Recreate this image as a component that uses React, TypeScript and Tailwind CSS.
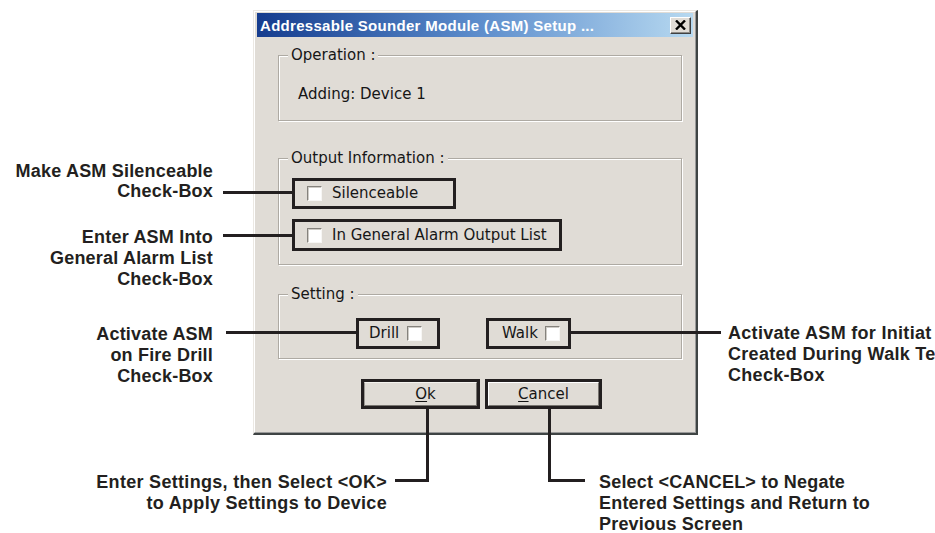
import React from 'react'

const ink = 'bg-[#231f20]'

const CheckBox = () => (
  <span className="inline-block w-[15px] h-[15px] shrink-0 bg-white border border-t-[#85827d] border-l-[#85827d] border-r-[#f7f6f4] border-b-[#f7f6f4] shadow-[inset_1px_1px_0_#cfccc7]" />
)

const Group = ({ label, className, children }: { label: string; className: string; children: React.ReactNode }) => (
  <div className={`relative w-[404px] ml-[21px] border border-[#aeaaa3] shadow-[inset_1px_1px_0_#fff,1px_1px_0_#fff] ${className}`}>
    <span className="absolute -top-[10px] left-[9px] bg-[#e0dcd6] px-[3px] leading-[18px]">{label}</span>
    {children}
  </div>
)

const App = () => {
  return (
    <div className="relative w-[935px] h-[533px] overflow-hidden bg-white">
      {/* dialog */}
      <div className="ml-[253px] pt-[10px]">
        <div className="w-[445px] h-[425px] border-l border-t border-[#ebe8e3] border-r-2 border-b-2 border-r-[#3f4444] border-b-[#3f4444]">
          <div className="h-full flex flex-col bg-[#e0dcd6] border border-t-white border-l-white border-r-[#9a9a9a] border-b-[#9a9a9a] px-[2px] pt-[1px] pb-[2px]
          font-['DejaVu_Sans',sans-serif] text-[15px] text-[#161616]">
            <div className="h-[24px] shrink-0 flex items-center justify-between pl-[3px] pr-[2px] bg-linear-to-r from-[#163c8e] via-[#5c8ccb] to-[#b7d9f0]">
              <span className="font-['Liberation_Sans',Arial,sans-serif] font-bold text-[15px] tracking-[0.3px] text-white leading-none">
                Addressable Sounder Module (ASM) Setup ...
              </span>
              <div className="w-[21px] h-[17px] flex items-center justify-center bg-[#e0dcd6] border border-t-white border-l-white border-r-[#404040] border-b-[#404040] shadow-[inset_-1px_-1px_0_#8d8a85]">
                <svg width="11" height="10" viewBox="0 0 11 10">
                  <path d="M1 0.5 L10 9.5 M10 0.5 L1 9.5" stroke="#000" strokeWidth="2.4" />
                </svg>
              </div>
            </div>

            <div className="flex-1 pt-[18px]">
              <Group label="Operation :" className="h-[66px] pt-[28px] pl-[19px]">
                <p className="leading-[20px]">Adding: Device 1</p>
              </Group>

              <Group label="Output Information :" className="mt-[37px] h-[107px] pt-[19px] pl-[13px] flex flex-col gap-[10px]">
                <div className="w-[164px] h-[31px] border-[3px] border-[#231f20] flex items-center pl-[12px] gap-[10px]">
                  <CheckBox />
                  <span>Silenceable</span>
                </div>
                <div className="w-[270px] h-[32px] border-[3px] border-[#231f20] flex items-center pl-[12px] gap-[10px]">
                  <CheckBox />
                  <span>In General Alarm Output List</span>
                </div>
              </Group>

              <Group label="Setting :" className="mt-[29px] h-[65px] pt-[23px] pl-[77px] flex gap-[46px]">
                <div className="w-[84px] h-[31px] border-[3px] border-[#231f20] flex items-center pl-[10px] gap-[8px]">
                  <span>Drill</span>
                  <CheckBox />
                </div>
                <div className="w-[85px] h-[31px] border-[3px] border-[#231f20] flex items-center pl-[13px] gap-[7px]">
                  <span>Walk</span>
                  <CheckBox />
                </div>
              </Group>

              <div className="mt-[20px] ml-[104px] flex gap-[5px]">
                <div className="w-[119px] h-[30px] border-[3px] border-[#231f20]">
                  <div className="h-full flex items-center justify-center pl-[10px] border border-t-[#f4f2ee] border-l-[#9b9893] border-r-[#77746f] border-b-[#77746f]">
                    <span><span className="underline underline-offset-2">O</span>k</span>
                  </div>
                </div>
                <div className="w-[117px] h-[30px] border-[3px] border-[#231f20]">
                  <div className="h-full flex items-center justify-center border border-t-white border-l-white border-r-[#77746f] border-b-[#77746f]">
                    <span><span className="underline underline-offset-2">C</span>ancel</span>
                  </div>
                </div>
              </div>
            </div>
          </div>
        </div>
      </div>

      {/* callouts */}
      <div className="font-['Liberation_Sans',Arial,sans-serif] font-bold text-[18px] tracking-[0.2px] text-[#231f20] whitespace-nowrap">
        <div className="absolute left-0 top-[161px] w-[213px] text-right leading-[20px]">
          Make ASM Silenceable<br />Check-Box
        </div>
        <div className="absolute left-0 top-[227px] w-[213px] text-right leading-[21px]">
          Enter ASM Into<br />General Alarm List<br />Check-Box
        </div>
        <div className="absolute left-0 top-[324px] w-[213px] text-right leading-[21px]">
          Activate ASM<br />on Fire Drill<br />Check-Box
        </div>
        <div className="absolute left-[728px] top-[323px] leading-[21px] tracking-[0.3px]">
          Activate ASM for Initiat<br />Created During Walk Te<br />Check-Box
        </div>
        <div className="absolute left-0 top-[472px] w-[387px] text-right leading-[21px] tracking-[0.3px]">
          Enter Settings, then Select &lt;OK&gt;<br />to Apply Settings to Device
        </div>
        <div className="absolute left-[599px] top-[472px] leading-[21px]">
          Select &lt;CANCEL&gt; to Negate<br />Entered Settings and Return to<br />Previous Screen
        </div>
      </div>

      {/* leader lines */}
      <div className={`absolute left-[223px] top-[191px] w-[70px] h-[3px] ${ink}`} />
      <div className={`absolute left-[223px] top-[234px] w-[70px] h-[3px] ${ink}`} />
      <div className={`absolute left-[226px] top-[331px] w-[131px] h-[3px] ${ink}`} />
      <div className={`absolute left-[570px] top-[331px] w-[151px] h-[3px] ${ink}`} />
      <div className={`absolute left-[426px] top-[408px] w-[3px] h-[74px] ${ink}`} />
      <div className={`absolute left-[395px] top-[479px] w-[34px] h-[3px] ${ink}`} />
      <div className={`absolute left-[548px] top-[408px] w-[3px] h-[74px] ${ink}`} />
      <div className={`absolute left-[548px] top-[479px] w-[37px] h-[3px] ${ink}`} />
    </div>
  )
}

export default App
